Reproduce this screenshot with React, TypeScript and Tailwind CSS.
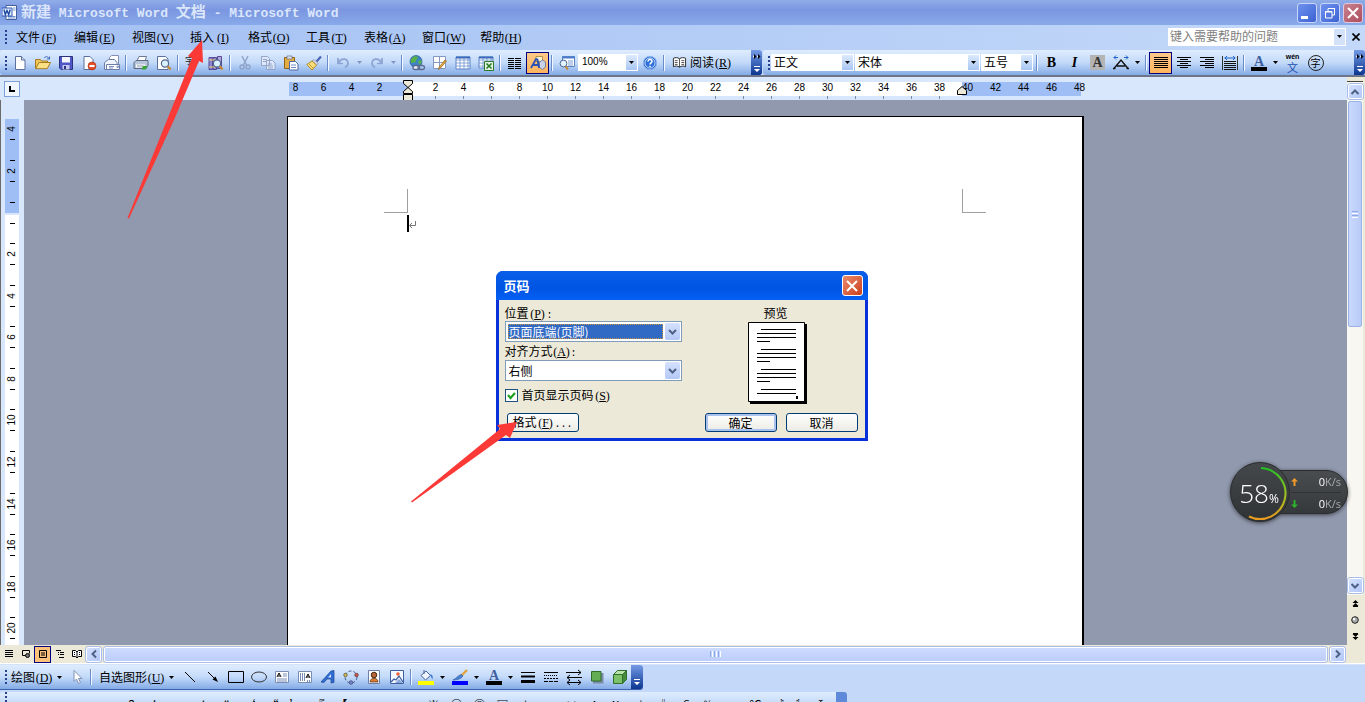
import React from "react";

type Kids = { children?: React.ReactNode };

const Icon = ({ children }: Kids) => (
	<svg viewBox="0 0 16 16" className="w-4 h-4 shrink-0" fill="none" aria-hidden="true">
		{children}
	</svg>
);

// shortcut letter of a label, always three half width cells
const Key = ({ k, after = "" }: { k: string; after?: string }) => (
	<>
		<span className="inline-block w-[18px] text-center font-['Liberation_Serif'] text-[12px]">
			(<u>{k}</u>)
		</span>
		{after && <span className="font-['Liberation_Mono'] text-[10px]">{after}</span>}
	</>
);

const Tool = ({ label, active, children }: Kids & { label: string; active?: boolean }) => (
	<button
		aria-label={label}
		title={label}
		className={
			active
				? "w-[23px] h-[22px] shrink-0 flex items-center justify-center border border-[#000080] bg-linear-to-b from-[#ffc98a] to-[#ffb45c]"
				: "w-[23px] h-[22px] shrink-0 flex items-center justify-center"
		}
	>
		{children}
	</button>
);

const Sep = () => (
	<span className="w-[6px] h-4 shrink-0 flex justify-center">
		<span className="w-px h-full bg-[#6a8ccb]" />
		<span className="w-px h-full bg-[#f1f9ff]" />
	</span>
);

const Caret = ({ color = "#000" }: { color?: string }) => (
	<svg viewBox="0 0 5 3" className="w-[5px] h-[3px] shrink-0" aria-hidden="true">
		<path d="M0 0h5L2.5 3z" fill={color} />
	</svg>
);

const Drop = ({ label, gray }: { label: string; gray?: boolean }) => (
	<button aria-label={label} className="w-[11px] h-[22px] shrink-0 flex items-center justify-center">
		<Caret color={gray ? "#8095c0" : "#000"} />
	</button>
);

const Grip = () => (
	<span className="w-2 shrink-0 flex flex-col items-center gap-[2px] pl-1">
		<i className="w-[2px] h-[2px] bg-[#27418f]" />
		<i className="w-[2px] h-[2px] bg-[#27418f]" />
		<i className="w-[2px] h-[2px] bg-[#27418f]" />
		<i className="w-[2px] h-[2px] bg-[#27418f]" />
	</span>
);

const Cap = () => (
	<button
		aria-label="工具栏选项"
		className="w-[12px] self-stretch shrink-0 rounded-r-[3px] bg-linear-to-b from-[#759be6] to-[#0b3590] flex items-end justify-center pb-1"
	>
		<svg viewBox="0 0 6 6" className="w-[6px] h-[6px]" aria-hidden="true">
			<path d="M0 0h6v1H0zM0 3h6L3 6z" fill="#fff" />
		</svg>
	</button>
);

const CapMore = () => (
	<button
		aria-label="更多按钮"
		className="w-[11px] self-stretch shrink-0 rounded-r-[3px] bg-linear-to-b from-[#759be6] to-[#0b3590] flex flex-col items-center justify-between pt-1 pb-[3px]"
	>
		<svg viewBox="0 0 8 5" className="w-2 h-[5px]" aria-hidden="true">
			<path d="M1 0l2.500 2.500L1 5zM5 0l2.500 2.500L5 5z" fill="#000" />
			<path d="M0 1l1 1.500L0 4zM4 1l1 1.500L4 4z" fill="#fff" />
		</svg>
		<svg viewBox="0 0 6 6" className="w-[6px] h-[6px]" aria-hidden="true">
			<path d="M0 0h6v1H0zM0 3h6L3 6z" fill="#fff" />
		</svg>
	</button>
);

const BarCombo = ({ label, value, width }: { label: string; value: string; width: string }) => (
	<span className={`${width} h-[17px] shrink-0 flex bg-white items-center mr-px`}>
		<select
			aria-label={label}
			className="appearance-none flex-1 min-w-0 h-[17px] pb-[2px] pl-[3px] bg-white outline-none text-[12px] leading-[15px]"
		>
			<option>{value}</option>
		</select>
		<span className="w-[11px] h-[15px] mr-px bg-linear-to-b from-[#dceafc] to-[#a9c6f2] flex items-center justify-center">
			<Caret />
		</span>
	</span>
);

const Glass = () => (
	<>
		<circle cx="9" cy="8.5" r="3.6" fill="#d9f0ff" stroke="#53688f" strokeWidth="1.2" />
		<path d="M11.7 11.2l3 3.3" stroke="#c88a35" strokeWidth="2.2" />
	</>
);

const Grid = ({ x = 1, y = 2, w = 14, h = 12, c = "#5d86c8" }) => (
	<>
		<path d={`M${x} ${y}h${w}v${h}h-${w}z`} fill="#fff" stroke={c} />
		<path
			d={`M${x} ${y + 3}h${w}M${x} ${y + 6}h${w}M${x} ${y + 9}h${w}M${x + 4} ${y}v${h}M${x + 8} ${y}v${h}M${x + 12} ${y}v${h}`}
			stroke={c}
			strokeWidth=".7"
		/>
	</>
);

const Lines = ({ d }: { d: string }) => (
	<Icon>
		<path d={d} stroke="#000" shapeRendering="crispEdges" />
	</Icon>
);

const TitleBar = () => (
	<header className="h-[25px] shrink-0 flex items-center pl-[2px] pr-[2px] bg-linear-to-b from-[#90ade9] via-[#7b96e0] via-40% to-[#88aaea]">
		<svg viewBox="0 0 16 16" className="w-4 h-4 mr-[3px]" aria-hidden="true">
			<path d="M4 .5h10.500v14H4z" fill="#fff" stroke="#43609c" />
			<path d="M11 3h2.500M11 5h2.500M6 11.500h7.500M6 13h7.500" stroke="#6f92cf" />
			<path d="M0 3h10v8H0z" fill="#e8f0ff" stroke="#2a57b0" />
			<path d="M2 4.500l1.300 5L5 5.500l1.700 4 1.500-5" fill="none" stroke="#1b469f" strokeWidth="1.400" />
		</svg>
		<h1 className="flex-1 text-[15px] leading-[20px] font-bold text-[#dbe6fb] whitespace-pre">
			新建
			<span className="font-['Liberation_Mono'] text-[13px]"> Microsoft Word </span>
			文档
			<span className="font-['Liberation_Mono'] text-[13px]"> - Microsoft Word</span>
		</h1>
		<div className="flex gap-[3px]">
			<button aria-label="最小化" className="w-5 h-5 rounded-[3px] border border-[#c9d6f7] bg-linear-to-br from-[#6f91ee] to-[#3c62d3] flex items-end pl-[3px] pb-[3px]">
				<span className="w-[7px] h-[3px] bg-white" />
			</button>
			<button aria-label="还原" className="w-5 h-5 rounded-[3px] border border-[#c9d6f7] bg-linear-to-br from-[#6f91ee] to-[#3c62d3] flex items-center justify-center">
				<svg viewBox="0 0 12 12" className="w-3 h-3" fill="none" aria-hidden="true">
					<path d="M4 4V1.500h6.500V8H8M1.500 4.500H8V11H1.500z" stroke="#fff" />
					<path d="M4 1.500h7M1 5h7" stroke="#fff" />
				</svg>
			</button>
			<button aria-label="关闭" className="w-5 h-5 rounded-[3px] border border-[#dfc9de] bg-linear-to-br from-[#c9838f] to-[#ad4b5f] flex items-center justify-center">
				<svg viewBox="0 0 12 12" className="w-3 h-3" aria-hidden="true">
					<path d="M1 1l10 10M11 1L1 11" stroke="#fff" strokeWidth="2" />
				</svg>
			</button>
		</div>
	</header>
);

const menus = [
	["文件", "F"],
	["编辑", "E"],
	["视图", "V"],
	["插入", "I"],
	["格式", "O"],
	["工具", "T"],
	["表格", "A"],
	["窗口", "W"],
	["帮助", "H"],
];

const MenuBar = () => (
	<nav className="h-[25px] pb-[2px] shrink-0 flex items-center bg-linear-to-r from-[#a3c0f3] to-[#c4d9f9]">
		<Grip />
		{menus.map(([name, k]) => (
			<button key={k} className="px-2 h-5 leading-5 whitespace-nowrap">
				{name}
				<Key k={k} />
			</button>
		))}
		<span className="flex-1" />
		<span className="w-[178px] h-[18px] flex items-center bg-white">
			<input
				aria-label="帮助"
				placeholder="键入需要帮助的问题"
				className="flex-1 min-w-0 h-[18px] pb-[2px] pl-[2px] outline-none placeholder:text-[#808080]"
			/>
			<span className="w-[11px] h-4 mr-px bg-[#d3e2f9] flex items-center justify-center">
				<Caret />
			</span>
		</span>
		<button aria-label="关闭文档" className="w-[19px] h-5 flex items-center justify-center">
			<svg viewBox="0 0 8 8" className="w-2 h-2" aria-hidden="true">
				<path d="M.5 .5l7 7M7.500 .5l-7 7" stroke="#000" strokeWidth="1.600" />
			</svg>
		</button>
	</nav>
);

const barBg = "bg-linear-to-b from-[#dfecfe] via-[#c3daf9] via-50% to-[#84abe6]";

const StandardBar = () => (
	<div className={`${barBg} flex items-center rounded-[3px] shrink-0`}>
		<Grip />
		<Tool label="新建空白文档">
			<Icon>
				<path d="M3.500 1.500h6l3.500 3.500v9.500H3.500z" fill="#fff" stroke="#5a6f9c" />
				<path d="M9.500 1.500V5H13" fill="#cfdcf3" stroke="#5a6f9c" />
			</Icon>
		</Tool>
		<Tool label="打开">
			<Icon>
				<path d="M.5 13.500V4.500h5l1 1.500h6v2" fill="#f0c659" stroke="#a57c22" />
				<path d="M.7 13.700L4 7.500h11.500l-3.300 6.200z" fill="#ffdf84" stroke="#a57c22" />
				<path d="M9 3c2-2 4-1.500 5 .5M14.500 1.500v2.500h-2.500" stroke="#3a6ab5" />
			</Icon>
		</Tool>
		<Tool label="保存">
			<Icon>
				<path d="M1.500 1.500h13v13H3l-1.500-1.500z" fill="#4f56c6" stroke="#2c317f" />
				<path d="M4 2h8v5.500H4z" fill="#f3f6ff" />
				<path d="M4.500 10h7v4.500h-7z" fill="#c4cbef" />
				<path d="M6 11h2v3H6z" fill="#2c317f" />
			</Icon>
		</Tool>
		<Tool label="权限">
			<Icon>
				<path d="M3 1.500h6L12 4.500v10H3z" fill="#fff" stroke="#5a6f9c" />
				<circle cx="11" cy="11" r="4" fill="#e1502b" stroke="#a9300f" strokeWidth=".6" />
				<path d="M8.500 11h5" stroke="#fff" strokeWidth="2" />
			</Icon>
		</Tool>
		<Tool label="电子邮件">
			<Icon>
				<path d="M5.500 6V2.500l2-2h7v9" fill="#fff" stroke="#8090b5" />
				<path d="M.5 7.500l4-3h6l2.500 3v7H.5z" fill="#eef3fc" stroke="#6c7fa9" />
				<path d="M2.500 9.500h13v5h-13z" fill="#fff" stroke="#6c7fa9" />
				<path d="M5 11.500h5M5 13h4M13 11h1.500v1.500H13z" stroke="#7f94c4" />
			</Icon>
		</Tool>
		<Sep />
		<Tool label="打印">
			<Icon>
				<path d="M4 6l2-4.500h7.500L12 6z" fill="#fff" stroke="#6b7892" />
				<path d="M1 7.500L3 5.500h12v5l-2 3H1z" fill="#b9c5d8" stroke="#5c6984" />
				<path d="M3 9.500h9v3H3z" fill="#fff" />
				<path d="M4 11h6.500" stroke="#8793ab" />
				<path d="M10 11h4.500L13 14.500H8.500z" fill="#37a536" />
			</Icon>
		</Tool>
		<Tool label="打印预览">
			<Icon>
				<path d="M1.500 1.500h8l2.500 2.500v10.500H1.500z" fill="#fff" stroke="#5a6f9c" />
				<Glass />
			</Icon>
		</Tool>
		<Sep />
		<Tool label="拼写和语法">
			<Icon>
				<text x="0" y="9" fontSize="9" fill="#222">字</text>
				<path d="M10 3l3 4M14 3l-4 5" stroke="#222" />
				<path d="M4 10l3 4 6-7" stroke="#2f5fc4" strokeWidth="1.800" />
			</Icon>
		</Tool>
		<Tool label="信息检索">
			<Icon>
				<path d="M1 2.500h3.500v12H1zM5 2.500h3.500v12H5z" fill="#8f86d2" stroke="#544a97" />
				<path d="M9.500 1.500h4v12h-4z" fill="#b3a7dc" stroke="#544a97" />
				<path d="M1 5h7M1 12h7" stroke="#f2d267" />
				<Glass />
			</Icon>
		</Tool>
		<Sep />
		<Tool label="剪切">
			<Icon>
				<path d="M5 1l4.500 9M11 1L6.500 10" stroke="#8fa1c8" strokeWidth="1.400" />
				<circle cx="5" cy="12" r="2" stroke="#8fa1c8" strokeWidth="1.400" />
				<circle cx="11" cy="12" r="2" stroke="#8fa1c8" strokeWidth="1.400" />
			</Icon>
		</Tool>
		<Tool label="复制">
			<Icon>
				<path d="M1.500 1.500h6l2 2v7h-8zM6.500 5.500h6l2.500 2.500v6.500H6.500z" fill="#dfe9f9" stroke="#93a5cb" />
				<path d="M3 4.500h4M3 6.500h3M8 9h4M8 11h5M8 13h5" stroke="#93a5cb" />
			</Icon>
		</Tool>
		<Tool label="粘贴">
			<Icon>
				<path d="M1.500 2.500h10v11h-10z" fill="#e4ad42" stroke="#8d651b" />
				<path d="M4 1h5v3H4z" fill="#dbe0ea" stroke="#69728a" strokeWidth=".7" />
				<path d="M6.500 6.500h6l2.500 2.500v6H6.500z" fill="#fff" stroke="#4d67a3" />
				<path d="M8 10h5M8 12.500h5" stroke="#6f8cc8" />
			</Icon>
		</Tool>
		<Tool label="格式刷">
			<Icon>
				<path d="M15 1.500l-4.500 5" stroke="#4c66b5" strokeWidth="2.200" />
				<path d="M8 4.500l4 4-1.500 1.500-4.500-4z" fill="#d7dcec" stroke="#6e7796" strokeWidth=".6" />
				<path d="M6 6l4.500 4L6 15 .8 9.500z" fill="#f8dd7a" stroke="#b18a2b" />
				<path d="M3 9l4 4" stroke="#c79f3c" />
			</Icon>
		</Tool>
		<Sep />
		<Tool label="撤消">
			<Icon>
				<path d="M3 3v5.500h5M3.500 8c2-5 9-5.500 9.500 0 0 2-1 3.500-3 4.500" stroke="#8da3d4" strokeWidth="1.700" />
			</Icon>
		</Tool>
		<Drop label="撤消列表" gray />
		<Tool label="恢复">
			<Icon>
				<path d="M13 3v5.500H8M12.500 8c-2-5-9-5.500-9.500 0 0 2 1 3.500 3 4.500" stroke="#8da3d4" strokeWidth="1.700" />
			</Icon>
		</Tool>
		<Drop label="恢复列表" gray />
		<Sep />
		<Tool label="插入超链接">
			<Icon>
				<circle cx="7" cy="6.500" r="6" fill="#3d83c9" stroke="#25588e" strokeWidth=".7" />
				<path d="M3 3c2-2 4-2 6-1 0 2-2 2-2 4s-3 1-4 2-2-3 0-5zM9 6l3-1 1 2-3 3z" fill="#58b147" />
				<rect x="4" y="10.500" width="6.500" height="4" rx="2" stroke="#596a8c" strokeWidth="1.300" fill="#e6edf8" />
				<rect x="9" y="10.500" width="6.500" height="4" rx="2" stroke="#596a8c" strokeWidth="1.300" />
			</Icon>
		</Tool>
		<Tool label="表格和边框">
			<Icon>
				<path d="M1.500 1.500h12v12h-12zM1.500 7.500h12M7.500 1.500v12" fill="#fff" stroke="#8598c3" />
				<path d="M14.500 6L8.500 13l-2 1.500.7-2.500L13 5z" fill="#eeb03b" stroke="#8d5d17" strokeWidth=".7" />
			</Icon>
		</Tool>
		<Tool label="插入表格">
			<Icon>
				<Grid />
				<path d="M1 1.500h14v2H1z" fill="#3a69bc" />
			</Icon>
		</Tool>
		<Tool label="插入 Excel 表格">
			<Icon>
				<Grid h={11} />
				<path d="M1 1.500h14v2H1z" fill="#3a69bc" />
				<path d="M6.500 6.500h9v9h-9z" fill="#e3f2df" stroke="#2a7a2a" />
				<path d="M8.500 8.500l5 5M13.500 8.500l-5 5" stroke="#227a22" strokeWidth="1.500" />
			</Icon>
		</Tool>
		<Sep />
		<Tool label="分栏">
			<Lines d="M1 3.500h6M1 5.500h6M1 7.500h6M1 9.500h6M1 11.500h6M1 13.500h6M8 3.500h6M8 5.500h6M8 7.500h6M8 9.500h6M8 11.500h6M8 13.500h6" />
		</Tool>
		<Tool label="绘图" active>
			<Icon>
				<path d="M6 1.500h6.500v5H6z" fill="#fff6d6" stroke="#a3812f" strokeWidth=".8" />
				<path d="M9.500 7l3-2 3 2v5l-3 2.500-3-2z" fill="#c9d2e6" stroke="#596a95" strokeWidth=".8" />
				<path d="M1 13l5-9 1.500.5L9 13M3 10h5" stroke="#2a51b3" strokeWidth="1.800" />
			</Icon>
		</Tool>
		<Sep />
		<Tool label="文档结构图">
			<Icon>
				<path d="M3.500 1.500h12v10h-12z" fill="#fff" stroke="#5f84c4" />
				<path d="M3 1.500h13v2H3z" fill="#4c7ccd" />
				<path d="M9 6h5M9 8h5M9 10h5" stroke="#7f9fd6" />
				<circle cx="4.500" cy="8.500" r="3.400" fill="#e2f3ff" stroke="#4d6690" />
				<path d="M6.500 11.500l2.500 3" stroke="#c88a35" strokeWidth="2" />
			</Icon>
		</Tool>
		<span className="w-[60px] h-[17px] flex items-center bg-white font-['Liberation_Sans']">
			<select aria-label="显示比例" className="appearance-none flex-1 min-w-0 h-[17px] pb-[2px] pl-1 outline-none text-[10px]">
				<option>100%</option>
			</select>
			<span className="w-[11px] h-[15px] mr-px bg-linear-to-b from-[#dceafc] to-[#a9c6f2] flex items-center justify-center">
				<Caret />
			</span>
		</span>
		<Tool label="Word 帮助">
			<Icon>
				<circle cx="8" cy="8" r="6.700" fill="#2f6fd8" stroke="#8bb3ee" />
				<circle cx="8" cy="8" r="5" stroke="#e9f3ff" strokeWidth=".8" />
				<path d="M6 6.500c0-2.800 4.200-2.500 4 0 0 1.300-2 1.400-2 3M8 10.800v1.200" stroke="#fff" strokeWidth="1.500" />
			</Icon>
		</Tool>
		<Sep />
		<button className="h-[22px] flex items-center gap-[3px] pl-[5px] whitespace-nowrap shrink-0">
			<svg viewBox="0 0 16 16" className="w-[15px] h-[15px]" fill="none" aria-hidden="true">
				<path d="M1.500 3.500c2-1 4.500-1 6.500.5 2-1.500 4.500-1.500 6.500-.5v9c-2-1-4.500-1-6.500.5-2-1.500-4.500-1.500-6.500-.5z" fill="#fff" stroke="#222" />
				<path d="M8 4v9M3 6h3M3 8h3M3 10h3M10 6h3M10 8h3M10 10h3" stroke="#222" strokeWidth=".8" />
			</svg>
			<span>
				阅读
				<Key k="R" />
			</span>
		</button>
		<span className="w-[19px]" />
		<CapMore />
	</div>
);

const FormatBar = () => (
	<div className={`${barBg} flex-1 min-w-0 flex items-center rounded-[3px] ml-px`}>
		<Grip />
		<BarCombo label="样式" value="正文" width="w-[83px]" />
		<BarCombo label="字体" value="宋体" width="w-[125px]" />
		<BarCombo label="字号" value="五号" width="w-[52px]" />
		<Sep />
		<Tool label="加粗">
			<b className="font-['Liberation_Serif'] text-[14px]">B</b>
		</Tool>
		<Tool label="倾斜">
			<i className="font-['Liberation_Serif'] font-bold text-[14px]">I</i>
		</Tool>
		<Tool label="字符底纹">
			<b className="w-[15px] h-[15px] leading-[15px] bg-[#b4b4b4] text-[#333] font-['Liberation_Serif'] text-[14px]">A</b>
		</Tool>
		<Tool label="字符缩放">
			<Icon>
				<path d="M0 13.500h2.500M13.500 13.500H16M1 13.500L8 5l7 8.500M4 11h8" stroke="#111" strokeWidth="1.400" />
				<path d="M1 2.500h4M11 2.500h4M3 .5l-2 2 2 2M13 .5l2 2-2 2" stroke="#1c62c6" />
			</Icon>
		</Tool>
		<Drop label="字符缩放列表" />
		<Sep />
		<Tool label="两端对齐" active>
			<Lines d="M1 2.500h14M1 4.500h14M1 6.500h14M1 8.500h14M1 10.500h14M1 12.500h14" />
		</Tool>
		<Tool label="居中">
			<Lines d="M1 2.500h14M4 4.500h8M1 6.500h14M4 8.500h8M1 10.500h14M4 12.500h8" />
		</Tool>
		<Tool label="右对齐">
			<Lines d="M1 2.500h14M6 4.500h9M1 6.500h14M6 8.500h9M1 10.500h14M6 12.500h9" />
		</Tool>
		<Tool label="分散对齐">
			<Icon>
				<path d="M.5 1v14M15.500 1v14" stroke="#333" />
				<path d="M2 6.500h12M2 8.500h12M2 10.500h12M2 12.500h12M2 14.500h12" stroke="#111" />
				<path d="M2.500 3h11M5 1L3 3l2 2M11 1l2 2-2 2" stroke="#1c62c6" />
			</Icon>
		</Tool>
		<Sep />
		<Tool label="字体颜色">
			<Icon>
				<text x="3" y="11" fontSize="14" fontWeight="bold" fontFamily="Liberation Serif" fill="#3f5f9f">A</text>
				<path d="M0 12h16v4H0z" fill="#000" />
			</Icon>
		</Tool>
		<Drop label="字体颜色列表" />
		<Tool label="拼音指南">
			<span className="flex flex-col items-center">
				<span className="font-['Liberation_Sans'] font-bold text-[7px] leading-[8px]">wén</span>
				<span className="text-[11px] leading-[12px] text-[#1f4fb0]">文</span>
			</span>
		</Tool>
		<Tool label="带圈字符">
			<span className="w-4 h-4 rounded-full border border-[#222] text-[10px] leading-[14px] text-center">字</span>
		</Tool>
		<span className="flex-1" />
		<CapMore />
	</div>
);

const leftMarks = [8, 6, 4, 2];
const rightMarks = Array.from({ length: 24 }, (_, i) => (i + 1) * 2);

const HRuler = () => (
	<div className="h-[23px] shrink-0 flex bg-[#d8e7fc]">
		<div className="w-6 shrink-0 flex items-center justify-center">
			<button aria-label="制表符" className="w-4 h-4 border border-[#7da0d8] bg-[#eef5ff] flex items-center justify-center">
				<span className="w-[6px] h-[6px] border-l-2 border-b-2 border-black" />
			</button>
		</div>
		<div className="flex-1 min-w-0 grid justify-center items-start grid-cols-[796px] pt-1">
			<div className="col-start-1 row-start-1 flex h-[14px] mt-px ml-px mr-[3px]">
				<span className="w-[118px] bg-[#9ebef5]" />
				<span className="w-[555px] bg-white" />
				<span className="flex-1 bg-[#9ebef5]" />
			</div>
			<div className="col-start-1 row-start-1 -ml-[6px] flex font-['Liberation_Sans'] text-[10px] leading-[14px]">
				{leftMarks.map((n) => (
					<span key={n} className="w-7 shrink-0 text-center">{n}</span>
				))}
				<span className="w-7 shrink-0 flex justify-center -mt-px">
					<svg viewBox="0 0 10 21" className="w-[10px] h-[21px]" fill="#ece9d8" stroke="#000" aria-hidden="true">
						<path d="M.5 .5h9v3L5 7.500.5 3.500zM.5 13.500v-2L5 7.500l4.500 4v2zM.5 14.500h9v6h-9z" />
					</svg>
				</span>
				{rightMarks.map((n) => (
					<span key={n} className="w-7 shrink-0 flex flex-col items-center">
						{n}
						{n < 40 && <i className="w-px h-[3px] mt-px bg-[#7e8aa3]" />}
					</span>
				))}
			</div>
			<svg viewBox="0 0 10 9" className="col-start-1 row-start-1 w-[10px] h-[9px] mt-[5px] ml-[669px]" aria-hidden="true">
				<path d="M.5 8.500v-4L5 .5l4.500 4v4z" fill="#ece9d8" stroke="#000" />
			</svg>
		</div>
	</div>
);

const vMarks = ["4", "2", "", "2", "4", "6", "8", "10", "12", "14", "16", "18", "20"];

const VRuler = () => (
	<div className="w-6 shrink-0 bg-[#d8e7fc] border-l border-[#6b6b6b] pl-1 overflow-hidden grid grid-cols-[14px] grid-rows-[minmax(0,1fr)]">
		<div className="col-start-1 row-start-1 flex flex-col pt-[19px]">
			<span className="h-[94px] bg-[#9ebef5]" />
			<span className="flex-1 mt-[2px] bg-white" />
		</div>
		<div className="col-start-1 row-start-1 h-[540px] mt-[9px] flex flex-col font-['Liberation_Sans'] text-[10px]">
			{vMarks.map((n, i) => (
				<span key={i} className="flex-1 flex flex-col items-center justify-center">
					{i > 0 && <i className="w-[5px] h-px bg-black" />}
					<span className="h-5 leading-5 -rotate-90">{n}</span>
					<i className="w-[5px] h-px bg-black" />
				</span>
			))}
		</div>
	</div>
);

const Page = () => (
	<main className="flex-1 min-w-0 bg-[#9199ae] flex justify-center overflow-hidden pt-4">
		<div className="w-[797px] shrink-0 h-full bg-white border-t border-l border-r-2 border-black pt-[72px] px-24">
			<div className="flex justify-between">
				<span className="w-6 h-6 border-r border-b border-[#a0a0a0]" />
				<span className="w-6 h-6 border-l border-b border-[#a0a0a0]" />
			</div>
			<p className="pl-[23px] mt-[2px] flex items-center">
				<span className="w-[2px] h-[17px] bg-black" />
				<svg viewBox="0 0 7 7" className="w-[7px] h-[7px] mt-[2px]" fill="none" aria-hidden="true">
					<path d="M6.500 0v4.500H1M3 2L.5 4.500 3 7" stroke="#777" />
				</svg>
			</p>
		</div>
	</main>
);

const ScrollBtn = ({ label, d }: { label: string; d: string }) => (
	<button
		aria-label={label}
		className="w-[15px] h-[15px] shrink-0 rounded-[2px] border border-white bg-linear-to-br from-[#d5e1fd] to-[#b2c6f6] flex items-center justify-center outline outline-[#a9bdea]"
	>
		<svg viewBox="0 0 10 10" className="w-[10px] h-[10px]" fill="none" aria-hidden="true">
			<path d={d} stroke="#4d6185" strokeWidth="2" />
		</svg>
	</button>
);

const VScroll = () => (
	<div className="w-[18px] shrink-0 bg-[#f8f7f2] flex flex-col items-center gap-[2px] border-r-2 border-[#ece9d8]">
		<span className="w-4 h-[5px] bg-[#ece9d8] border-b border-[#444]" />
		<ScrollBtn label="向上" d="M1.500 7L5 3.500 8.500 7" />
		<div className="w-[14px] h-[226px] rounded-[2px] border border-[#9bb2e6] bg-linear-to-r from-[#c9d8fc] to-[#b9cbf8] flex flex-col items-center justify-center gap-px">
			<i className="w-[6px] h-px bg-[#8ca9e8]" />
			<i className="w-[6px] h-px bg-white" />
			<i className="w-[6px] h-px bg-[#8ca9e8]" />
			<i className="w-[6px] h-px bg-white" />
		</div>
		<span className="flex-1" />
		<ScrollBtn label="向下" d="M1.500 3L5 6.500 8.500 3" />
		<div className="w-full h-[50px] bg-[#ece9d8] flex flex-col items-center justify-around">
			<button aria-label="前一页">
				<svg viewBox="0 0 7 7" className="w-[7px] h-[7px]" aria-hidden="true">
					<path d="M3.500 0L6.500 3h-6zM3.500 3L6.500 6h-6zM1 6h5v1H1z" />
				</svg>
			</button>
			<button aria-label="选择浏览对象">
				<svg viewBox="0 0 8 8" className="w-2 h-2" aria-hidden="true">
					<circle cx="4" cy="4" r="3.300" fill="#aaa" stroke="#222" />
					<circle cx="3" cy="3" r="1.200" fill="#fff" />
				</svg>
			</button>
			<button aria-label="下一页">
				<svg viewBox="0 0 7 7" className="w-[7px] h-[7px]" aria-hidden="true">
					<path d="M3.500 7L6.500 4h-6zM3.500 4L6.500 1h-6zM1 0h5v1H1z" />
				</svg>
			</button>
		</div>
	</div>
);

const viewBtn = "w-[17px] h-[17px] flex items-center justify-center";

const StatusRow = () => (
	<div className="h-[18px] shrink-0 flex items-center bg-[#ece9d8] pr-[20px]">
		<button aria-label="普通视图" className={viewBtn}>
			<svg viewBox="0 0 10 10" className="w-[10px] h-[10px]" stroke="#000">
				<path d="M1 1.500h8M1 3.500h8M1 5.500h8M1 7.500h8" />
			</svg>
		</button>
		<button aria-label="Web 版式视图" className={viewBtn}>
			<svg viewBox="0 0 10 10" className="w-[10px] h-[10px]" stroke="#000" fill="none">
				<path d="M1.500 1.500h7v3M1.500 1.500v5h3" />
				<circle cx="6.500" cy="6.500" r="2" fill="#777" />
			</svg>
		</button>
		<button aria-label="页面视图" className="w-[17px] h-[17px] flex items-center justify-center border border-[#000080] bg-[#ffc27a]">
			<svg viewBox="0 0 10 10" className="w-[10px] h-[10px] shrink-0" stroke="#000" fill="none">
				<path d="M1.500 1.500h7v7h-7zM3 4h4M3 6h4" />
			</svg>
		</button>
		<button aria-label="大纲视图" className={viewBtn}>
			<svg viewBox="0 0 10 10" className="w-[10px] h-[10px]" stroke="#000">
				<path d="M1 1.500h5M3 3.500h1M5 3.500h4M3 5.500h1M5 5.500h4M4 8.500h5" />
			</svg>
		</button>
		<button aria-label="阅读版式" className={viewBtn}>
			<svg viewBox="0 0 10 10" className="w-[10px] h-[10px]" stroke="#000" fill="#fff">
				<path d="M.5 1.500h3L5 3l1.500-1.500h3v6h-3L5 9 3.500 7.500h-3zM5 3v6M2 3.500h1M2 5.500h1M7 3.500h1M7 5.500h1" />
			</svg>
		</button>
		<div className="flex-1 flex items-center gap-[3px] pl-px">
			<ScrollBtn label="向左" d="M7 1.500L3.500 5 7 8.500" />
			<div className="flex-1 h-[15px] rounded-[2px] border border-white outline outline-[#a9bdea] bg-linear-to-b from-[#cddbff] to-[#bccdf9] flex items-center justify-center gap-px">
				<i className="w-px h-[6px] bg-[#8ca9e8]" />
				<i className="w-px h-[6px] bg-white" />
				<i className="w-px h-[6px] bg-[#8ca9e8]" />
				<i className="w-px h-[6px] bg-white" />
				<i className="w-px h-[6px] bg-[#8ca9e8]" />
				<i className="w-px h-[6px] bg-white" />
			</div>
			<ScrollBtn label="向右" d="M3 1.500L6.500 5 3 8.500" />
		</div>
	</div>
);

const DrawBar = () => (
	<div className="h-[25px] shrink-0 flex">
		<div className={`${barBg} flex items-center rounded-r-[3px] border-b border-[#3b62ab]`}>
			<Grip />
			<button className="h-[22px] pl-[3px] flex items-center gap-1 whitespace-nowrap">
				<span>
					绘图
					<Key k="D" />
				</span>
				<Caret />
			</button>
			<span className="w-[3px]" />
			<Tool label="选择对象">
				<Icon>
					<path d="M5 1.500v11l2.500-2.500 2 4.500 2-1-2-4H13z" fill="#fff" stroke="#8091b5" />
				</Icon>
			</Tool>
			<Sep />
			<button className="h-[22px] pl-[5px] pr-1 flex items-center gap-1 whitespace-nowrap">
				<span>
					自选图形
					<Key k="U" />
				</span>
				<Caret />
			</button>
			<Tool label="直线">
				<Icon>
					<path d="M3 3l10 10" stroke="#000" />
				</Icon>
			</Tool>
			<Tool label="箭头">
				<Icon>
					<path d="M3 3l6 6" stroke="#000" />
					<path d="M13 13L7.500 10.500l3-3z" fill="#000" />
				</Icon>
			</Tool>
			<Tool label="矩形">
				<Icon>
					<path d="M.5 2.500h15v11H.5z" stroke="#000" />
				</Icon>
			</Tool>
			<Tool label="椭圆">
				<Icon>
					<ellipse cx="8" cy="8" rx="7.500" ry="5" stroke="#333" />
				</Icon>
			</Tool>
			<Tool label="文本框">
				<Icon>
					<path d="M1.500 2.500h13v11h-13z" fill="#fff" stroke="#7a8db5" />
					<path d="M3 8l2-4 2 4M4 7h2" stroke="#000" />
					<path d="M9 5h4M9 7h4M3 10h10M3 12h10" stroke="#7a8db5" />
				</Icon>
			</Tool>
			<Tool label="竖排文本框">
				<Icon>
					<path d="M1.500 2.500h13v11h-13z" fill="#fff" stroke="#7a8db5" />
					<path d="M9 9l2-4 2 4M10 8h2" stroke="#000" />
					<path d="M3.500 4v8M5.500 4v8M7.500 4v8M10.500 11v2M12.500 11v2" stroke="#7a8db5" />
				</Icon>
			</Tool>
			<Tool label="艺术字">
				<Icon>
					<path d="M1 13L11 2l3-.5v12l-3 .5v-4H7L4 13.500z" fill="#2f6fd3" stroke="#1c448f" strokeWidth=".7" />
					<path d="M8 8.500l3-3.500v3.500z" fill="#d5e4fb" />
				</Icon>
			</Tool>
			<Tool label="组织结构图">
				<Icon>
					<circle cx="8" cy="8" r="6" stroke="#44598a" strokeDasharray="3 2" />
					<circle cx="2.500" cy="6" r="1.800" fill="#d4b545" stroke="#554" strokeWidth=".7" />
					<circle cx="13.500" cy="6" r="1.800" fill="#d55146" stroke="#544" strokeWidth=".7" />
					<circle cx="8" cy="13.500" r="1.800" fill="#7487d6" stroke="#446" strokeWidth=".7" />
				</Icon>
			</Tool>
			<Tool label="剪贴画">
				<Icon>
					<path d="M2.500 1.500h11v13h-11z" fill="#fff" stroke="#6d7fa6" />
					<circle cx="8" cy="6" r="2.800" fill="#b86535" stroke="#442a18" />
					<path d="M4 13c0-5 8-5 8 0z" fill="#dd7c35" stroke="#442a18" strokeWidth=".7" />
				</Icon>
			</Tool>
			<Tool label="图片">
				<Icon>
					<path d="M1.500 1.500h13v13h-13z" fill="#f4f8ff" stroke="#3f5f9f" />
					<path d="M2 13l3-3 2 1 3-4 4 6" stroke="#3f5f9f" strokeWidth="1.300" />
					<path d="M6 14l4-4 4 4z" fill="#8aa7dd" />
					<circle cx="9" cy="5" r="1.800" fill="#f0633a" />
				</Icon>
			</Tool>
			<Sep />
			<Tool label="填充颜色">
				<Icon>
					<path d="M3 6.500L8 2l4.500 4.500L7.500 11z" fill="#eef4ff" stroke="#48649c" />
					<path d="M12 5.500c3 0 3 2 2.500 5-1-2-2-3-2.500-5z" fill="#3f7cd8" />
					<path d="M6 5V1" stroke="#48649c" />
					<path d="M0 12h16v4H0z" fill="#ffff00" />
				</Icon>
			</Tool>
			<Drop label="填充颜色列表" />
			<Tool label="线条颜色">
				<Icon>
					<path d="M15 1L9 7" stroke="#e1a33a" strokeWidth="2.400" />
					<path d="M9.500 5.500L11 7c-2 3-6 4-10 4 3-1 5-5 8.500-5.500z" fill="#4d83d8" stroke="#2c559b" strokeWidth=".6" />
					<path d="M0 12h16v4H0z" fill="#0000ff" />
				</Icon>
			</Tool>
			<Drop label="线条颜色列表" />
			<Tool label="字体颜色">
				<Icon>
					<text x="3" y="11" fontSize="14" fontWeight="bold" fontFamily="Liberation Serif" fill="#3f5f9f">A</text>
					<path d="M0 12h16v4H0z" fill="#000" />
				</Icon>
			</Tool>
			<Drop label="字体颜色列表" />
			<Tool label="线型">
				<Icon>
					<path d="M1 3h14v1H1zM1 6.500h14v2H1zM1 11h14v3H1z" fill="#000" />
				</Icon>
			</Tool>
			<Tool label="虚线线型">
				<Icon>
					<path d="M1 3.500h14" stroke="#000" />
					<path d="M1 6.500h14" stroke="#000" strokeDasharray="1 1" />
					<path d="M1 9.500h14" stroke="#000" strokeDasharray="2 1" />
					<path d="M1 12.500h14" stroke="#000" strokeDasharray="4 1" />
				</Icon>
			</Tool>
			<Tool label="箭头样式">
				<Icon>
					<path d="M0 3.500h15M1 8.500h15M1 13.500h14M12 1l3 2.500L12 6M4 6L1 8.500 4 11M4 11l-3 2.500L4 16M12 11l3 2.500-3 2.500" stroke="#000" />
				</Icon>
			</Tool>
			<Tool label="阴影样式">
				<Icon>
					<path d="M4 4h10.500v10.500H4z" fill="#7c8ba6" />
					<path d="M2.500 2.500h9.500v9.500H2.500z" fill="#63ae55" stroke="#2f6f2a" />
				</Icon>
			</Tool>
			<Tool label="三维效果样式">
				<Icon>
					<path d="M1.500 5.500h9v9h-9z" fill="#7cc06a" stroke="#2f6f2a" />
					<path d="M1.500 5.500l4-4h9l-4 4z" fill="#b9e2aa" stroke="#2f6f2a" />
					<path d="M10.500 14.500l4-4v-9l-4 4z" fill="#468c3c" stroke="#2f6f2a" />
				</Icon>
			</Tool>
			<Cap />
		</div>
	</div>
);

const symbols = "，。、；：？！…'\"‘“’『【〃—～※○◎□＋－×÷№￠‖§‰．℃〝〞℡".split("");

const SymbolBar = () => (
	<div className="h-[10px] shrink-0 flex mt-[2px] overflow-hidden">
		<div className="bg-linear-to-b from-[#dfecfe] to-[#c9ddf9] flex items-start rounded-t-[3px]">
			<span className="self-end">
				<Grip />
			</span>
			{symbols.map((s) => (
				<button key={s} className="w-[23px] h-5 mt-[3px] shrink-0 leading-5 text-center">
					{s}
				</button>
			))}
			<span className="w-[11px] self-stretch rounded-tr-[3px] bg-[#5f8ada]" />
		</div>
	</div>
);

const DlgSelect = ({ id, value, focus }: { id: string; value: string; focus?: boolean }) => (
	<span className="w-[177px] h-[21px] flex items-center bg-white border border-[#7f9db9] p-px">
		<select
			id={id}
			className={
				focus
					? "appearance-none flex-1 min-w-0 h-[15px] ml-px mr-[2px] leading-[13px] bg-[#316ac5] text-white border border-dotted border-[#ce953a] outline-none"
					: "appearance-none flex-1 min-w-0 h-[15px] ml-px mr-[2px] pl-px leading-[15px] outline-none"
			}
		>
			<option>{value}</option>
		</select>
		<span className="w-[15px] h-[17px] rounded-[2px] bg-linear-to-b from-[#d5e1fd] to-[#b4c8f6] flex items-center justify-center">
			<svg viewBox="0 0 9 6" className="w-[9px] h-[6px]" fill="none" aria-hidden="true">
				<path d="M1 1l3.500 3.500L8 1" stroke="#4d6185" strokeWidth="2" />
			</svg>
		</span>
	</span>
);

const dlgBtn =
	"w-[72px] h-[19px] rounded-[3px] border border-[#003c74] bg-linear-to-b from-white to-[#ecebe5] leading-[16px] text-center whitespace-nowrap";

const Dialog = () => (
	<section
		role="dialog"
		aria-label="页码"
		className="absolute left-1/2 top-[271px] -translate-x-1/2 w-[372px] ml-[-1px] rounded-t-[7px] bg-[#0831d9] overflow-hidden pb-[3px]"
	>
		<div className="h-[29px] flex items-center pl-2 pr-[5px] bg-linear-to-b from-[#0a5fe8] via-[#0054e3] via-60% to-[#0560f5]">
			<h2 className="flex-1 text-white font-bold text-[13px]">页码</h2>
			<button aria-label="关闭" className="w-[21px] h-[21px] rounded-[3px] border border-white bg-linear-to-br from-[#ea8a6a] to-[#cc3d16] flex items-center justify-center">
				<svg viewBox="0 0 12 12" className="w-3 h-3" aria-hidden="true">
					<path d="M1 1l10 10M11 1L1 11" stroke="#fff" strokeWidth="2" />
				</svg>
			</button>
		</div>
		<div className="mx-[3px] bg-[#ece9d8] px-[6px] pt-1 pb-[6px]">
			<div className="flex">
				<div className="w-[177px] flex flex-col">
					<label htmlFor="pos" className="h-[17px] leading-[17px]">
						位置
						<Key k="P" after=":" />
					</label>
					<DlgSelect id="pos" value="页面底端(页脚)" focus />
					<label htmlFor="align" className="h-[18px] leading-[18px]">
						对齐方式
						<Key k="A" after=":" />
					</label>
					<DlgSelect id="align" value="右侧" />
					<label className="mt-[6px] h-4 leading-4 flex items-center gap-1">
						<span className="grid w-[13px] h-[13px]">
							<input type="checkbox" defaultChecked className="col-start-1 row-start-1 appearance-none w-[13px] h-[13px] border border-[#1c5180] bg-white" />
							<svg viewBox="0 0 13 13" className="col-start-1 row-start-1 w-[13px] h-[13px] pointer-events-none" fill="none" aria-hidden="true">
								<path d="M3 6l2.500 3L10 4" stroke="#21a121" strokeWidth="2.200" />
							</svg>
						</span>
						<span>
							首页显示页码
							<Key k="S" />
						</span>
					</label>
				</div>
				<div className="flex-1 flex flex-col items-center pl-[11px]">
					<span className="h-[18px] leading-[17px]">预览</span>
					<svg viewBox="0 0 60 84" className="w-[60px] h-[84px] ml-1" aria-hidden="true">
						<path d="M2 2h57v80H2z" />
						<path d="M.5 .5h56v79H.5z" fill="#fff" stroke="#000" />
						<path
							d="M13 7.500h35M9 11.500h39M9 15.500h39M9 19.500h13M13 27.500h35M9 31.500h39M9 35.500h39M9 39.500h13M13 47.500h35M9 51.500h39M9 55.500h39M9 59.500h13M13 67.500h35M9 71.500h39"
							stroke="#000"
						/>
						<path d="M48 74h2v3h-2z" />
					</svg>
				</div>
			</div>
			<div className="flex mt-[7px]">
				<button className={`${dlgBtn} ml-[2px]`}>
					格式
					<Key k="F" after="..." />
				</button>
				<span className="flex-1" />
				<button className={`${dlgBtn} shadow-[inset_0_0_0_2px_#a9c2ee]`}>确定</button>
				<button className={`${dlgBtn} ml-[9px] mr-px`}>取消</button>
			</div>
		</div>
	</section>
);

const SpeedBall = () => (
	<aside className="absolute right-[17px] top-[462px] flex items-center text-white font-['Open_Sans'] drop-shadow-[0_1px_2px_rgba(0,0,0,0.6)]">
		<div className="w-[60px] h-[60px] rounded-full bg-linear-to-b from-[#45484b] to-[#303335] border border-[#2a2c2e] grid place-items-center z-10">
			<svg viewBox="0 0 60 60" className="col-start-1 row-start-1 w-[60px] h-[60px]" fill="none" aria-hidden="true">
				<defs>
					<linearGradient id="ring" x1="0" y1="0" x2="0" y2="1">
						<stop offset="0" stopColor="#22c322" />
						<stop offset=".5" stopColor="#9cc41f" />
						<stop offset="1" stopColor="#eb9c1f" />
					</linearGradient>
				</defs>
				<path d="M30 5a25.500 25.500 0 1 1-12 48.500" stroke="url(#ring)" strokeWidth="2" />
			</svg>
			<span className="col-start-1 row-start-1 flex items-baseline -ml-1">
				<span className="font-light text-[26px] leading-[30px]">58</span>
				<span className="text-[12px]">%</span>
			</span>
		</div>
		<div className="w-[72px] -ml-[14px] h-[44px] rounded-r-full bg-linear-to-b from-[#4a4d50] to-[#36393b] border border-[#2a2c2e] flex flex-col pl-[14px] pr-[6px] text-[11px] leading-[21px]">
			<span className="flex justify-between items-center border-b border-[#303234]">
				<svg viewBox="0 0 7 8" className="w-[7px] h-2" aria-hidden="true">
					<path d="M3.500 0L7 3.500H4.500V8h-2V3.500H0z" fill="#ef9a2a" />
				</svg>
				<span>0<span className="text-[#a8abad]">K/s</span></span>
			</span>
			<span className="flex justify-between items-center">
				<svg viewBox="0 0 7 8" className="w-[7px] h-2" aria-hidden="true">
					<path d="M3.500 8L7 4.500H4.500V0h-2v4.500H0z" fill="#2fae2f" />
				</svg>
				<span>0<span className="text-[#a8abad]">K/s</span></span>
			</span>
		</div>
	</aside>
);

// red pointers drawn over the window
const Pointers = () => (
	<>
		<svg viewBox="0 0 80 180" className="absolute left-[126px] top-10 w-20 h-[180px] pointer-events-none" aria-hidden="true">
			<path d="M76 0L62 16l4 2-25 62L1.500 178l1.500.5L48 80l25-59 4 2z" fill="#fb3a38" />
		</svg>
		<svg viewBox="0 0 110 84" className="absolute left-[410px] top-[420px] w-[110px] h-[84px] pointer-events-none" aria-hidden="true">
			<path d="M107 2L100 18l-4-3L2 82.500 1 81.500 90 9l-3-4z" fill="#fb3a38" />
		</svg>
	</>
);

const App = () => {
	return (
		<div className="relative h-screen w-full flex flex-col overflow-hidden bg-[#c4d9f9] text-black text-[12px] font-['Noto_Sans_CJK_SC',sans-serif] cursor-default">
			<TitleBar />
			<MenuBar />
			<div className="h-[25px] shrink-0 flex">
				<StandardBar />
				<FormatBar />
			</div>
			<div className="h-[2px] shrink-0 bg-[#6d7688]" />
			<div className="flex-1 min-h-0 flex">
				<div className="flex-1 min-w-0 flex flex-col">
					<HRuler />
					<div className="flex-1 min-h-0 flex">
						<VRuler />
						<Page />
					</div>
				</div>
				<VScroll />
			</div>
			<StatusRow />
			<div className="h-[2px] shrink-0 bg-white border-b border-[#d5e3fa]" />
			<DrawBar />
			<SymbolBar />
			<Dialog />
			<SpeedBall />
			<Pointers />
		</div>
	);
};

export default App;
